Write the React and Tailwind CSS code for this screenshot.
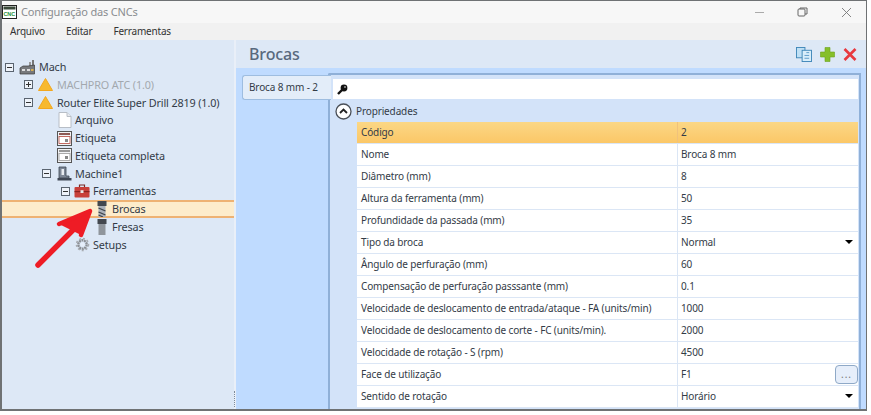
import React from "react";

const font = "font-['Noto_Sans','Liberation_Sans',sans-serif]";

const rows = [
  ["Código", "2"],
  ["Nome", "Broca 8 mm"],
  ["Diâmetro (mm)", "8"],
  ["Altura da ferramenta (mm)", "50"],
  ["Profundidade da passada (mm)", "35"],
  ["Tipo da broca", "Normal", "select"],
  ["Ângulo de perfuração (mm)", "60"],
  ["Compensação de perfuração passsante (mm)", "0.1"],
  ["Velocidade de deslocamento de entrada/ataque - FA (units/min)", "1000"],
  ["Velocidade de deslocamento de corte - FC (units/min).", "2000"],
  ["Velocidade de rotação - S (rpm)", "4500"],
  ["Face de utilização", "F1", "dots"],
  ["Sentido de rotação", "Horário", "select"],
];

function Toggle({ open }) {
  return (
    <span className="w-[9px] h-[9px] border border-[#5a6470] bg-[#eef3fa] flex items-center justify-center relative shrink-0">
      <span className="w-[5px] h-px bg-[#333]" />
      {!open && <span className="absolute w-px h-[5px] bg-[#333]" />}
    </span>
  );
}

function Warn() {
  return (
    <svg width="15" height="13" viewBox="0 0 15 13" className="shrink-0 mr-[1px]">
      <path d="M7.5 0.5 L14.5 12.5 L0.5 12.5 Z" fill="#f7b92f" stroke="#f2a71f" strokeLinejoin="round" />
    </svg>
  );
}

function Factory() {
  return (
    <svg width="16" height="15" viewBox="0 0 16 15" className="shrink-0 mr-[1px]">
      <rect x="13" y="0" width="2" height="6" fill="#777" />
      <rect x="10" y="2" width="2" height="4" fill="#999" />
      <path d="M1 14 V8 L4 6 H9 L15.5 5 V14 Z" fill="#77797c" stroke="#3a3a3a" strokeWidth="0.7" />
      <rect x="3" y="9" width="3" height="2" fill="#ddd" />
      <rect x="8" y="9" width="3" height="2" fill="#ddd" />
      <rect x="12" y="9" width="2.5" height="2" fill="#d8b050" />
    </svg>
  );
}

function Doc() {
  return (
    <svg width="14" height="16" viewBox="0 0 14 16" className="shrink-0">
      <path d="M1 0.5 H9 L13 4.5 V15.5 H1 Z" fill="#fff" stroke="#b8bec6" />
      <path d="M9 0.5 V4.5 H13" fill="#e6e9ee" stroke="#b8bec6" />
    </svg>
  );
}

function LabelIcon({ full }) {
  return (
    <svg width="15" height="15" viewBox="0 0 15 15" className="shrink-0">
      <rect x="0.5" y="0.5" width="14" height="14" fill="#f2f3f5" stroke="#555" />
      <rect x="2" y="2" width="11" height="2" fill={full ? "#999" : "#8d5a55"} />
      <rect x="2" y="5.5" width="11" height="7" fill="#fff" stroke={full ? "#999" : "#b5483e"} strokeWidth="0.8" />
      <rect x="8" y="8" width="3" height="3" fill="#888" />
    </svg>
  );
}

function MachineIcon() {
  return (
    <svg width="15" height="15" viewBox="0 0 15 15" className="shrink-0">
      <path d="M2 1 H9 V10 H12 V12 H2 Z" fill="#7d8796" stroke="#3e4654" strokeWidth="0.8" />
      <rect x="4.5" y="3" width="2.5" height="6" fill="#e7ebf0" />
      <rect x="0.5" y="12" width="14" height="2.5" fill="#3e4654" />
    </svg>
  );
}

function Toolbox() {
  return (
    <svg width="16" height="14" viewBox="0 0 16 14" className="shrink-0">
      <path d="M5.5 3 V1 H10.5 V3" fill="none" stroke="#7a2a26" strokeWidth="1.2" />
      <rect x="0.5" y="3" width="15" height="10.5" rx="1" fill="#c8403a" />
      <rect x="0.5" y="7" width="15" height="1.2" fill="#8a2320" />
      <rect x="6.5" y="6.2" width="3" height="2.8" fill="#e8e8e8" />
    </svg>
  );
}

function Bit({ drill }) {
  return (
    <svg width="10" height="16" viewBox="0 0 10 16" className="shrink-0">
      <rect x="0.5" y="0" width="9" height="5" fill="#43484f" />
      <rect x="1.5" y="5" width="7" height="11" fill={drill ? "#aab0b8" : "#8f959c"} />
      {drill && <path d="M1.5 7 L8.5 10 M1.5 11 L8.5 14 M1.5 14 L6 16" stroke="#3d4248" strokeWidth="1.2" />}
    </svg>
  );
}

function Gear() {
  return (
    <svg width="15" height="15" viewBox="0 0 15 15" className="shrink-0">
      <circle cx="7.5" cy="7.5" r="4.2" fill="none" stroke="#8b8f95" strokeWidth="2.4" strokeDasharray="2 0.6" />
      <circle cx="7.5" cy="7.5" r="6" fill="none" stroke="#a7abb1" strokeWidth="1.6" strokeDasharray="2 2" />
      <circle cx="7.5" cy="7.5" r="2" fill="#e6eefa" />
    </svg>
  );
}

function TreeRow({ left, toggle, toggleGap = 5, icon, label, className = "", gap = "gap-[3px]" }) {
  return (
    <div className={`h-[17.75px] flex items-center ${className}`} style={{ paddingLeft: left }}>
      {toggle !== undefined && <span style={{ marginRight: toggleGap }}><Toggle open={toggle} /></span>}
      <span className={`flex items-center ${gap}`}>
        {icon}
        <span className="whitespace-nowrap">{label}</span>
      </span>
    </div>
  );
}

function Sidebar() {
  return (
    <div className="w-[232px] shrink-0 bg-[#dde8f6] pt-[18.25px] text-[10.8px] text-[#333b47]">
      <TreeRow left={3} toggle={true} icon={<Factory />} label="Mach" />
      <TreeRow left={22} toggle={false} icon={<Warn />} label="MACHPRO ATC (1.0)" className="text-[#a3a8ae]" />
      <TreeRow left={22} toggle={true} icon={<Warn />} label="Router Elite Super Drill 2819 (1.0)" />
      <TreeRow left={56} icon={<Doc />} label="Arquivo" />
      <TreeRow left={55} icon={<LabelIcon />} label="Etiqueta" />
      <TreeRow left={55} icon={<LabelIcon full />} label="Etiqueta completa" />
      <TreeRow left={40} toggle={true} toggleGap={6} icon={<MachineIcon />} label="Machine1" />
      <TreeRow left={59} toggle={true} toggleGap={4} icon={<Toolbox />} label="Ferramentas" />
      <TreeRow left={95} icon={<Bit drill />} gap="gap-[5px]" label="Brocas" className="border-y-2 border-[#eeb273] bg-[#fdeccb]" />
      <TreeRow left={95} icon={<Bit />} gap="gap-[5px]" label="Fresas" />
      <TreeRow left={73} icon={<Gear />} gap="gap-[3px]" label="Setups" />
    </div>
  );
}

function Row({ label, value, kind, active }) {
  return (
    <div className={`h-[22px] flex items-center border-b border-[#dbe6f5] ${active ? "bg-gradient-to-b from-[#fbd785] to-[#fbc767]" : "bg-white"}`}>
      <div className="w-[320px] shrink-0 pl-[4px] whitespace-nowrap overflow-hidden">{label}</div>
      <div className={`flex-1 h-full flex items-center pl-[3px] border-l relative ${active ? "border-[#f0c27c]" : "border-[#dbe6f5]"}`}>
        {value}
        {kind === "select" && (
          <span className="absolute right-[5px] top-[8px] w-0 h-0 border-x-[4px] border-x-transparent border-t-[4px] border-t-black" />
        )}
        {kind === "dots" && (
          <span className="absolute right-0 top-[1px] w-[23px] h-[19px] rounded-[4px] border border-[#8fa9c7] bg-[#e6eefa] text-center leading-[17px] tracking-[1px] text-[#777]">...</span>
        )}
      </div>
    </div>
  );
}

function Main() {
  return (
    <div className="flex-1 flex flex-col min-w-0">
      <div className="h-[28px] bg-[#dde8f6] flex items-center justify-between pl-[13px] pr-[9px] shrink-0">
        <span className="text-[16px] text-[#58697d] font-medium">Brocas</span>
        <span className="flex items-center gap-[8px]">
          <svg width="16" height="15" viewBox="0 0 17 16">
            <rect x="0.5" y="0.5" width="9" height="11" fill="#bfe0f5" stroke="#3f86b8" />
            <rect x="6.5" y="3.5" width="10" height="12" fill="#d8eefa" stroke="#3f86b8" />
            <path d="M11 6h3M9 9h5M9 12h5" stroke="#5a9ac6" />
          </svg>
          <svg width="15" height="15" viewBox="0 0 15 15">
            <path d="M5 0.5 H10 V5 H14.5 V10 H10 V14.5 H5 V10 H0.5 V5 H5 Z" fill="#86bf2a" stroke="#6da31d" strokeWidth="0.6" />
          </svg>
          <svg width="14" height="13" viewBox="0 0 14 13">
            <path d="M1.5 1 L12.5 12 M12.5 1 L1.5 12" stroke="#e8393f" strokeWidth="2.6" />
          </svg>
        </span>
      </div>
      <div className="flex-1 bg-[#bfdbff] flex pt-[5px] min-h-0">
        <div className="pt-[2px] pl-[6px] w-[92px] shrink-0">
          <div className="h-[25px] -mr-[3px] relative z-10 bg-[#e3edf9] border border-[#9ebde0] border-r-0 rounded-l-[3px] flex items-center pl-[6px] text-[#333b47] whitespace-nowrap">
            Broca 8 mm - 2
          </div>
        </div>
        <div className="flex-1 min-w-0 border-2 border-b-0 border-[#8fb0d8] bg-[#d3e3f9] mr-[5px] pt-[4px] pl-[3px] pr-[1px] overflow-hidden rounded-tl-[2px]">
          <div className="h-[20px] bg-white flex items-center pl-[4px]">
            <svg width="11" height="11" viewBox="0 0 11 11">
              <circle cx="7" cy="4" r="3.4" fill="#111" />
              <path d="M5 6 L1 10" stroke="#111" strokeWidth="2.4" />
              <circle cx="8" cy="3" r="0.8" fill="#fff" />
            </svg>
          </div>
          <div className="h-[23px] flex items-center pt-[2px] pl-[2px] gap-[4px] text-[#333b47]">
            <svg width="17" height="17" viewBox="0 0 17 17" className="shrink-0">
              <circle cx="8.5" cy="8.5" r="7.5" fill="#fff" stroke="#4a4f57" strokeWidth="1.3" />
              <path d="M5 10 L8.5 6.5 L12 10" fill="none" stroke="#222" strokeWidth="1.8" />
            </svg>
            Propriedades
          </div>
          <div className="ml-[24px] text-[#333b47]">
            {rows.map((r, i) => (
              <Row key={r[0]} label={r[0]} value={r[1]} kind={r[2]} active={i === 0} />
            ))}
          </div>
        </div>
      </div>
    </div>
  );
}

export default function App() {
  return (
    <div className={`w-[871px] h-[415px] bg-white overflow-hidden ${font}`}>
      <div className="w-[867px] h-[411px] border-2 border-t-[1px] border-r-[1px] border-[#6f7274] flex flex-col text-[10px] tracking-[-0.13px] relative overflow-hidden">
        <div className="h-[22px] bg-[#f7f7f7] flex items-center shrink-0">
          <svg width="15" height="14" viewBox="0 0 15 14" className="shrink-0">
            <rect x="0.5" y="0.5" width="14" height="13" fill="#fff" stroke="#222" />
            <rect x="1.5" y="1.5" width="12" height="3" fill="#3a4a3a" />
            <text x="1.5" y="11" fontSize="5.5" fontWeight="700" fill="#1d8f3a" fontFamily="Liberation Sans">CNC</text>
          </svg>
          <span className="ml-[4px] text-[11px] tracking-[-0.2px] text-[#8a8d90]">Configuração das CNCs</span>
          <div className="ml-auto flex items-center">
            <span className="w-[9px] h-px bg-[#aaa] mr-[33px]" />
            <svg width="11" height="10" viewBox="0 0 11 10" className="mr-[33px]">
              <rect x="1" y="2" width="7" height="7" rx="1" fill="none" stroke="#666" />
              <path d="M3 2 V1 H10 V7 H8" fill="none" stroke="#666" />
            </svg>
            <svg width="11" height="11" viewBox="0 0 11 11" className="mr-[14px]">
              <path d="M1 1 L10 10 M10 1 L1 10" stroke="#777" strokeWidth="0.9" />
            </svg>
          </div>
        </div>
        <div className="h-[17px] bg-[#f1f1f1] flex items-center shrink-0 pl-[8px] gap-[21px] text-[#333] tracking-[-0.2px]">
          <span>Arquivo</span>
          <span>Editar</span>
          <span>Ferramentas</span>
        </div>
        <div className="flex-1 flex min-h-0">
          <Sidebar />
          <div className="w-[2px] bg-[#e9eff8] shrink-0 flex items-end pb-[2px]">
            <span className="h-[16px] w-px border-l border-dotted border-[#7d8a99]" />
          </div>
          <Main />
        </div>
        {/* seta vermelha por cima da arvore */}
        <svg width="70" height="70" viewBox="0 0 70 70" className="absolute left-[30px] top-[205px] pointer-events-none">
          <path d="M6 59 L52 13" stroke="#ee1c25" strokeWidth="5.5" strokeLinecap="round" />
          <path d="M27 18 L58 5 L49 29" fill="#ee1c25" stroke="#ee1c25" strokeWidth="4.5" strokeLinejoin="round" strokeLinecap="round" />
        </svg>
      </div>
    </div>
  );
}
